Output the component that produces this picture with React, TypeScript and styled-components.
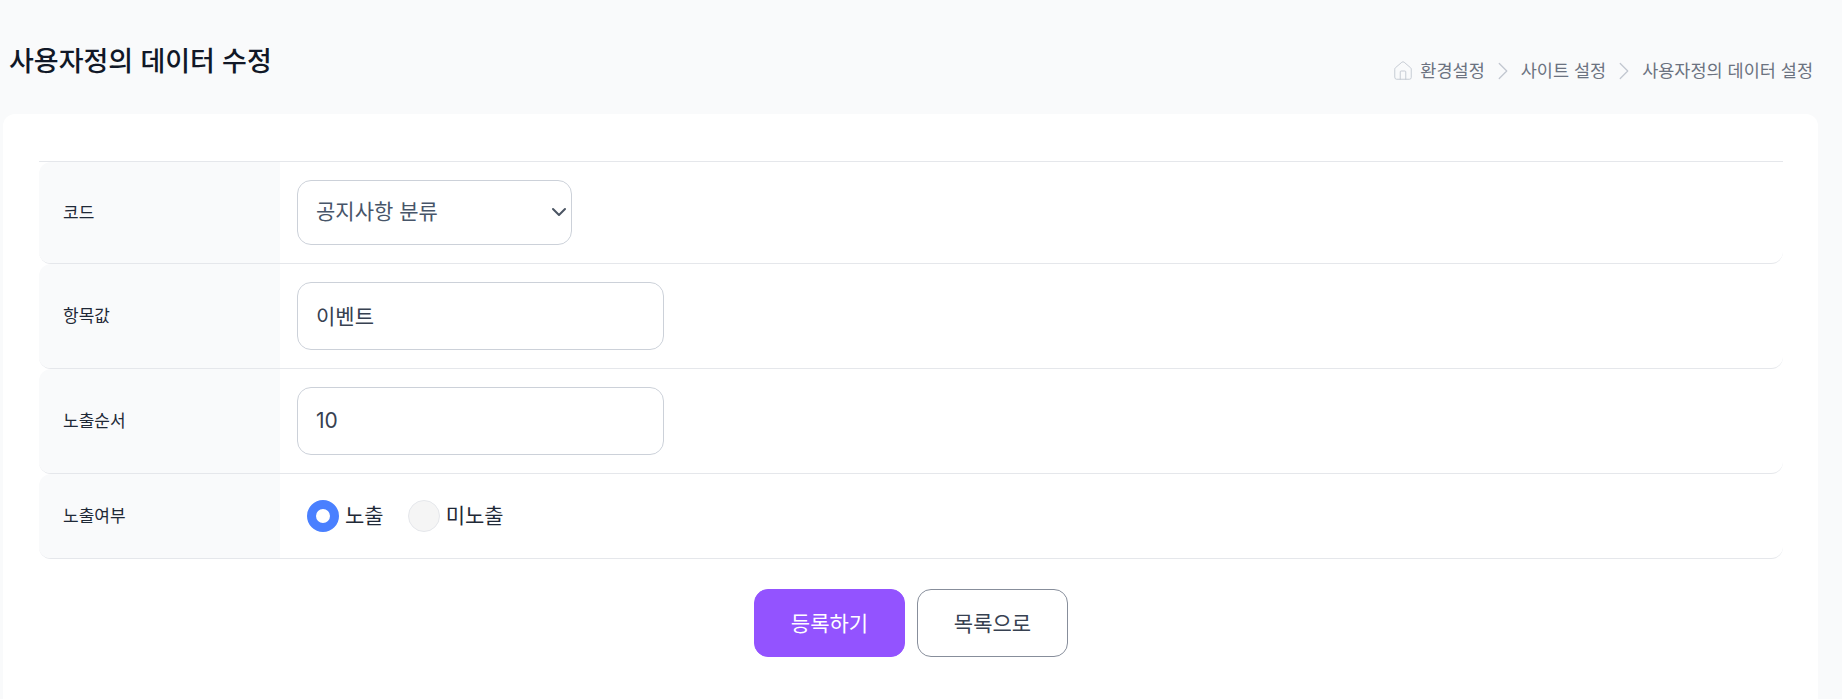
import React from 'react';
import styled, { createGlobalStyle } from 'styled-components';
import { ChevronDown, ChevronRight, House } from 'lucide-react';

const GlobalStyle = createGlobalStyle`
  html, body {
    margin: 0;
    height: 100%;
    overflow: hidden;
    background: #f9fafb;
    font-family: Inter, "Noto Sans CJK KR", sans-serif;
  }
  * { box-sizing: border-box; }
`;

const Page = styled.div`
  height: 699px;
  padding: 0 24px 0 3px;
  display: flex;
  flex-direction: column;
`;

const Header = styled.header`
  height: 114px;
  padding: 44px 5px 0 6px;
  display: flex;
  justify-content: space-between;
  align-items: flex-start;
`;

const Title = styled.h1`
  margin: 0;
  font-size: 27px;
  line-height: 36px;
  font-weight: 500;
  color: #111827;
`;

const Breadcrumb = styled.nav`
  margin-top: 12px;
  display: flex;
  align-items: center;
  gap: 3px;
  font-size: 17.5px;
  line-height: 26px;
  color: #6b7280;
`;

const Crumb = styled.span`
  display: flex;
  align-items: center;
  gap: 6px;
`;

const Card = styled.main`
  flex: 1;
  background: #fff;
  border-radius: 12px 12px 0 0;
  padding: 47px 35px 0 36px;
`;

const Table = styled.div`
  border-top: 1px solid #e5e7eb;
`;

const Row = styled.div`
  display: grid;
  grid-template-columns: 241px 1fr;
  border-bottom: 1px solid #e5e7eb;
  border-radius: 12px;
  overflow: hidden;
`;

const Label = styled.div`
  display: flex;
  align-items: center;
  padding: 0 0 3px 24px;
  background: #f9fafb;
  font-size: 17px;
  color: #1f2937;
`;

const Value = styled.div`
  padding: 18px 17px;
  display: flex;
  align-items: center;
`;

const SelectWrap = styled.div`
  position: relative;
  width: 275px;
  height: 65px;
  color: #4b5563;
  svg {
    position: absolute;
    right: 1px;
    top: 20px;
    pointer-events: none;
  }
`;

const Select = styled.select`
  width: 100%;
  height: 100%;
  appearance: none;
  padding: 0 18px 2px;
  border: 1px solid #ccd1d9;
  border-radius: 14px;
  background: #fff;
  font: inherit;
  font-size: 21px;
  color: #475569;
`;

const TextInput = styled.input`
  width: 367px;
  height: 68px;
  padding: 0 18px 2px;
  border: 1px solid #ccd1d9;
  border-radius: 14px;
  background: #fff;
  font: inherit;
  font-size: 21px;
  color: #374151;
`;

const RadioGroup = styled.div`
  padding: 0 10px;
  height: 48px;
  display: flex;
  align-items: center;
  gap: 24px;
`;

const RadioLabel = styled.label`
  display: flex;
  align-items: center;
  gap: 6px;
  font-size: 21px;
  line-height: 28px;
  color: #1f2937;
`;

const Radio = styled.input`
  appearance: none;
  margin: 0;
  width: 32px;
  height: 32px;
  border-radius: 50%;
  border: 1px solid #e5e7eb;
  background: #f5f5f5;
  &:checked {
    border: 9px solid #4a80ff;
    background: #fff;
  }
`;

const Actions = styled.div`
  margin-top: 30px;
  display: flex;
  justify-content: center;
  gap: 12px;
`;

const Button = styled.button<{ $primary?: boolean }>`
  width: 151px;
  height: 68px;
  padding-bottom: 3px;
  border-radius: 14px;
  border: 1px solid ${p => (p.$primary ? '#9353ff' : '#878e9b')};
  background: ${p => (p.$primary ? '#9353ff' : '#fff')};
  color: ${p => (p.$primary ? '#fff' : '#374151')};
  font: inherit;
  font-size: 21px;
`;

export default function App() {
  return (
    <Page>
      <GlobalStyle />
      <Header>
        <Title>사용자정의 데이터 수정</Title>
        <Breadcrumb>
          <Crumb>
            <House size={22} strokeWidth={1} color="#c2c7d0" />
            환경설정
          </Crumb>
          <ChevronRight size={30} strokeWidth={1} color="#c2c7d0" />
          <Crumb>사이트 설정</Crumb>
          <ChevronRight size={30} strokeWidth={1} color="#c2c7d0" />
          <Crumb>사용자정의 데이터 설정</Crumb>
        </Breadcrumb>
      </Header>
      <Card>
        <Table>
          <Row>
            <Label>코드</Label>
            <Value>
              <SelectWrap>
                <Select defaultValue="notice">
                  <option value="notice">공지사항 분류</option>
                </Select>
                <ChevronDown size={24} strokeWidth={2} />
              </SelectWrap>
            </Value>
          </Row>
          <Row>
            <Label>항목값</Label>
            <Value>
              <TextInput defaultValue="이벤트" />
            </Value>
          </Row>
          <Row>
            <Label>노출순서</Label>
            <Value>
              <TextInput defaultValue="10" />
            </Value>
          </Row>
          <Row>
            <Label>노출여부</Label>
            <Value>
              <RadioGroup>
                <RadioLabel>
                  <Radio type="radio" name="visible" defaultChecked />
                  노출
                </RadioLabel>
                <RadioLabel>
                  <Radio type="radio" name="visible" />
                  미노출
                </RadioLabel>
              </RadioGroup>
            </Value>
          </Row>
        </Table>
        <Actions>
          <Button $primary>등록하기</Button>
          <Button>목록으로</Button>
        </Actions>
      </Card>
    </Page>
  );
}
